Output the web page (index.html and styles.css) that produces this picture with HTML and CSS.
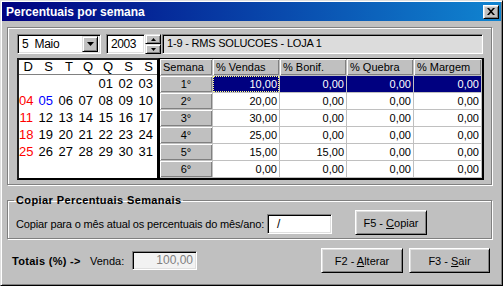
FILE: index.html
```html
<!DOCTYPE html>
<html>
<head>
<meta charset="utf-8">
<link rel="stylesheet" href="styles.css">
</head>
<body>
<div class="window">
  <div class="titlebar">
    <span class="title">Percentuais por semana</span>
    <span class="close-btn"><svg width="8" height="7" viewBox="0 0 8 7"><path d="M0 0h2l2 2.3L6 0h2L5 3.5 8 7H6L4 4.7 2 7H0l3-3.5z" fill="#000"/></svg></span>
  </div>
  <div class="client">
    <div class="panel">
      <div class="top-row">
        <div class="combo">
          <span class="combo-text">5&nbsp; Maio</span>
          <span class="drop-btn"><svg width="7" height="4" viewBox="0 0 7 4"><path d="M0 0h7L3.5 4z" fill="#000"/></svg></span>
        </div>
        <div class="year">2003</div>
        <div class="spin">
          <span class="spin-btn"><svg width="5" height="3" viewBox="0 0 5 3"><path d="M2.5 0L5 3H0z" fill="#000"/></svg></span>
          <span class="spin-btn"><svg width="5" height="3" viewBox="0 0 5 3"><path d="M0 0h5L2.5 3z" fill="#000"/></svg></span>
        </div>
        <div class="store">1-9 - RMS SOLUCOES - LOJA 1</div>
      </div>
      <div class="main-row">
        <div class="calendar">
          <div class="cal-head">
            <span>D</span><span>S</span><span>T</span><span>Q</span><span>Q</span><span>S</span><span>S</span>
          </div>
          <div class="cal-days">
            <span></span><span></span><span></span><span></span><span>01</span><span>02</span><span>03</span>
            <span class="sun">04</span><span class="today">05</span><span>06</span><span>07</span><span>08</span><span>09</span><span>10</span>
            <span class="sun">11</span><span>12</span><span>13</span><span>14</span><span>15</span><span>16</span><span>17</span>
            <span class="sun">18</span><span>19</span><span>20</span><span>21</span><span>22</span><span>23</span><span>24</span>
            <span class="sun">25</span><span>26</span><span>27</span><span>28</span><span>29</span><span>30</span><span>31</span>
          </div>
        </div>
        <div class="grid">
          <div class="c fx hd">Semana</div><div class="c fx hd">% Vendas</div><div class="c fx hd">% Bonif.</div><div class="c fx hd">% Quebra</div><div class="c fx hd">% Margem</div>
          <div class="c fx wk">1°</div><div class="c sel focus">10,00</div><div class="c sel">0,00</div><div class="c sel">0,00</div><div class="c sel">0,00</div>
          <div class="c fx wk">2°</div><div class="c">20,00</div><div class="c">0,00</div><div class="c">0,00</div><div class="c">0,00</div>
          <div class="c fx wk">3°</div><div class="c">30,00</div><div class="c">0,00</div><div class="c">0,00</div><div class="c">0,00</div>
          <div class="c fx wk">4°</div><div class="c">25,00</div><div class="c">0,00</div><div class="c">0,00</div><div class="c">0,00</div>
          <div class="c fx wk">5°</div><div class="c">15,00</div><div class="c">15,00</div><div class="c">0,00</div><div class="c">0,00</div>
          <div class="c fx wk">6°</div><div class="c">0,00</div><div class="c">0,00</div><div class="c">0,00</div><div class="c">0,00</div>
        </div>
      </div>
    </div>
    <fieldset class="group">
      <legend>Copiar Percentuais Semanais</legend>
      <div class="copy-row">
        <span class="copy-label">Copiar para o mês atual os percentuais do mês/ano:</span>
        <div class="copy-edit">/</div>
        <button class="btn btn-copy">F5 - <u>C</u>opiar</button>
      </div>
    </fieldset>
    <div class="totals-row">
      <span class="totals-label">Totais (%) -&gt;</span>
      <span class="venda-label">Venda:</span>
      <div class="venda-box">100,00</div>
      <button class="btn btn-alterar">F2 - <u>A</u>lterar</button>
      <button class="btn btn-sair">F3 - <u>S</u>air</button>
    </div>
  </div>
</div>
</body>
</html>
```
FILE: styles.css
```css
* { box-sizing: border-box; }
body {
  margin: 0;
  background: #c0c0c0;
  font-family: "Liberation Sans", Arial, sans-serif;
  font-size: 11px;
  color: #000;
}
.window {
  width: 503px;
  height: 286px;
  background: #c0c0c0;
  border: 1px solid;
  border-color: #dfdfdf #000 #000 #dfdfdf;
  box-shadow: inset 1px 1px 0 #fff, inset -1px -1px 0 #808080;
  padding: 1px;
  display: flex;
  flex-direction: column;
}
.titlebar {
  height: 19px;
  background: linear-gradient(to right, #000080, #1084d0);
  display: flex;
  align-items: center;
  justify-content: space-between;
  padding: 0 2px 0 4px;
  color: #fff;
  font-weight: bold;
  font-size: 12px;
}
.close-btn {
  width: 16px;
  height: 14px;
  background: #c0c0c0;
  border: 1px solid;
  border-color: #fff #000 #000 #fff;
  box-shadow: inset 1px 1px 0 #dfdfdf, inset -1px -1px 0 #808080;
  display: flex;
  align-items: center;
  justify-content: center;
}
.client {
  flex: 1;
  padding: 6px 9px 0 5px;
  display: flex;
  flex-direction: column;
}
.panel {
  height: 158px;
  border: 1px solid #808080;
  box-shadow: inset 1px 1px 0 #fff, 1px 1px 0 #fff;
  padding: 6px 7px 4px 9px;
  display: flex;
  flex-direction: column;
  gap: 4px;
}
.top-row {
  height: 20px;
  display: flex;
}
.combo, .year, .store, .copy-edit, .venda-box {
  border: 1px solid;
  border-color: #808080 #fff #fff #808080;
  box-shadow: inset 1px 1px 0 #000, inset -1px -1px 0 #dfdfdf;
}
.combo {
  width: 84px;
  background: #fff;
  display: flex;
  align-items: center;
  justify-content: space-between;
  padding: 2px 2px 2px 4px;
  font-size: 12px;
  letter-spacing: -0.3px;
}
.drop-btn {
  width: 16px;
  height: 16px;
  background: #c0c0c0;
  border: 1px solid;
  border-color: #dfdfdf #000 #000 #dfdfdf;
  box-shadow: inset 1px 1px 0 #fff, inset -1px -1px 0 #808080;
  display: flex;
  align-items: center;
  justify-content: center;
}
.year {
  width: 39px;
  margin-left: 5px;
  background: #fff;
  padding: 0 0 0 4px;
  line-height: 18px;
  font-size: 12px;
  letter-spacing: -0.4px;
}
.spin {
  width: 16px;
  display: flex;
  flex-direction: column;
}
.spin-btn {
  flex: 1;
  background: #c0c0c0;
  border: 1px solid;
  border-color: #dfdfdf #000 #000 #dfdfdf;
  box-shadow: inset 1px 1px 0 #fff, inset -1px -1px 0 #808080;
  display: flex;
  align-items: center;
  justify-content: center;
}
.store {
  width: 321px;
  margin-left: 1px;
  background: #dcdcdc;
  padding: 1px 0 0 4px;
  line-height: 14px;
  font-size: 11px;
  letter-spacing: -0.2px;
}
.main-row {
  height: 122px;
  display: flex;
}
.calendar {
  width: 143px;
  border: 2px solid #000;
  border-color: #202020 #000 #000 #202020;
  background: #fff;
  font-size: 13px;
}
.cal-head, .cal-days {
  display: grid;
  grid-template-columns: 16px repeat(6, 20px);
}
.cal-head {
  height: 15px;
  line-height: 14px;
  border-bottom: 1px solid #808080;
}
.cal-days {
  grid-auto-rows: 17px;
  line-height: 17px;
}
.cal-head span, .cal-days span {
  text-align: right;
  padding-right: 2px;
}
.cal-days .sun { color: #ff0000; }
.cal-days .today { color: #0000ff; }
.grid {
  width: 325px;
  display: grid;
  grid-template-columns: 52px 66px 66px 66px 67px;
  grid-auto-rows: 16px;
  gap: 1px;
  background: #c0c0c0;
  border: 1px solid #000;
  border-right-width: 2px;
  border-bottom-width: 2px;
  padding: 0 1px 1px 0;
}
.c {
  background: #fff;
  text-align: right;
  padding-right: 2px;
  line-height: 16px;
  white-space: nowrap;
}
.fx {
  background: #c0c0c0;
  box-shadow: inset 1px 1px 0 #fff, inset -1px -1px 0 #808080;
}
.hd {
  text-align: left;
  padding: 0 0 0 3px;
}
.wk {
  text-align: center;
  padding: 0;
}
.sel {
  background: #000080;
  color: #fff;
}
.focus {
  outline: 1px dotted #ffff80;
  outline-offset: -1px;
}
.group {
  margin: 9px 0 0 0;
  border: 1px solid #808080;
  box-shadow: inset 1px 1px 0 #fff, 1px 1px 0 #fff;
  padding: 3px 6px 3px 6px;
  min-width: 0;
}
.group legend {
  padding: 0 2px;
  font-weight: bold;
  font-size: 11px;
  line-height: 13px;
  letter-spacing: 0.4px;
}
.copy-row {
  height: 25px;
  display: flex;
  align-items: center;
  margin-left: 2px;
}
.copy-label {
  width: 251px;
  white-space: nowrap;
  margin-top: 3px;
  letter-spacing: -0.15px;
  overflow: hidden;
}
.copy-edit {
  width: 65px;
  height: 20px;
  background: #fff;
  padding-left: 9px;
  line-height: 18px;
  font-size: 12px;
  margin-top: 3px;
}
.btn {
  font-family: "Liberation Sans", Arial, sans-serif;
  font-size: 11px;
  color: #000;
  background: #c0c0c0;
  border: 1px solid;
  border-color: #fff #000 #000 #fff;
  box-shadow: inset 1px 1px 0 #dfdfdf, inset -1px -1px 0 #808080;
  height: 25px;
  padding: 0;
}
.btn-copy {
  width: 72px;
  margin-left: 23px;
}
.totals-row {
  height: 25px;
  margin-top: 9px;
  display: flex;
  align-items: center;
  padding: 0 2px 0 5px;
}
.totals-label {
  width: 78px;
  font-weight: bold;
  letter-spacing: 0.3px;
  white-space: nowrap;
}
.venda-label {
  width: 42px;
}
.venda-box {
  width: 65px;
  height: 19px;
  background: #f2f2f2;
  color: #808080;
  text-align: right;
  padding-right: 3px;
  line-height: 17px;
  font-size: 12px;
}
.btn-alterar {
  width: 82px;
  margin-left: auto;
}
.btn-sair {
  width: 81px;
  margin-left: 6px;
}
```
